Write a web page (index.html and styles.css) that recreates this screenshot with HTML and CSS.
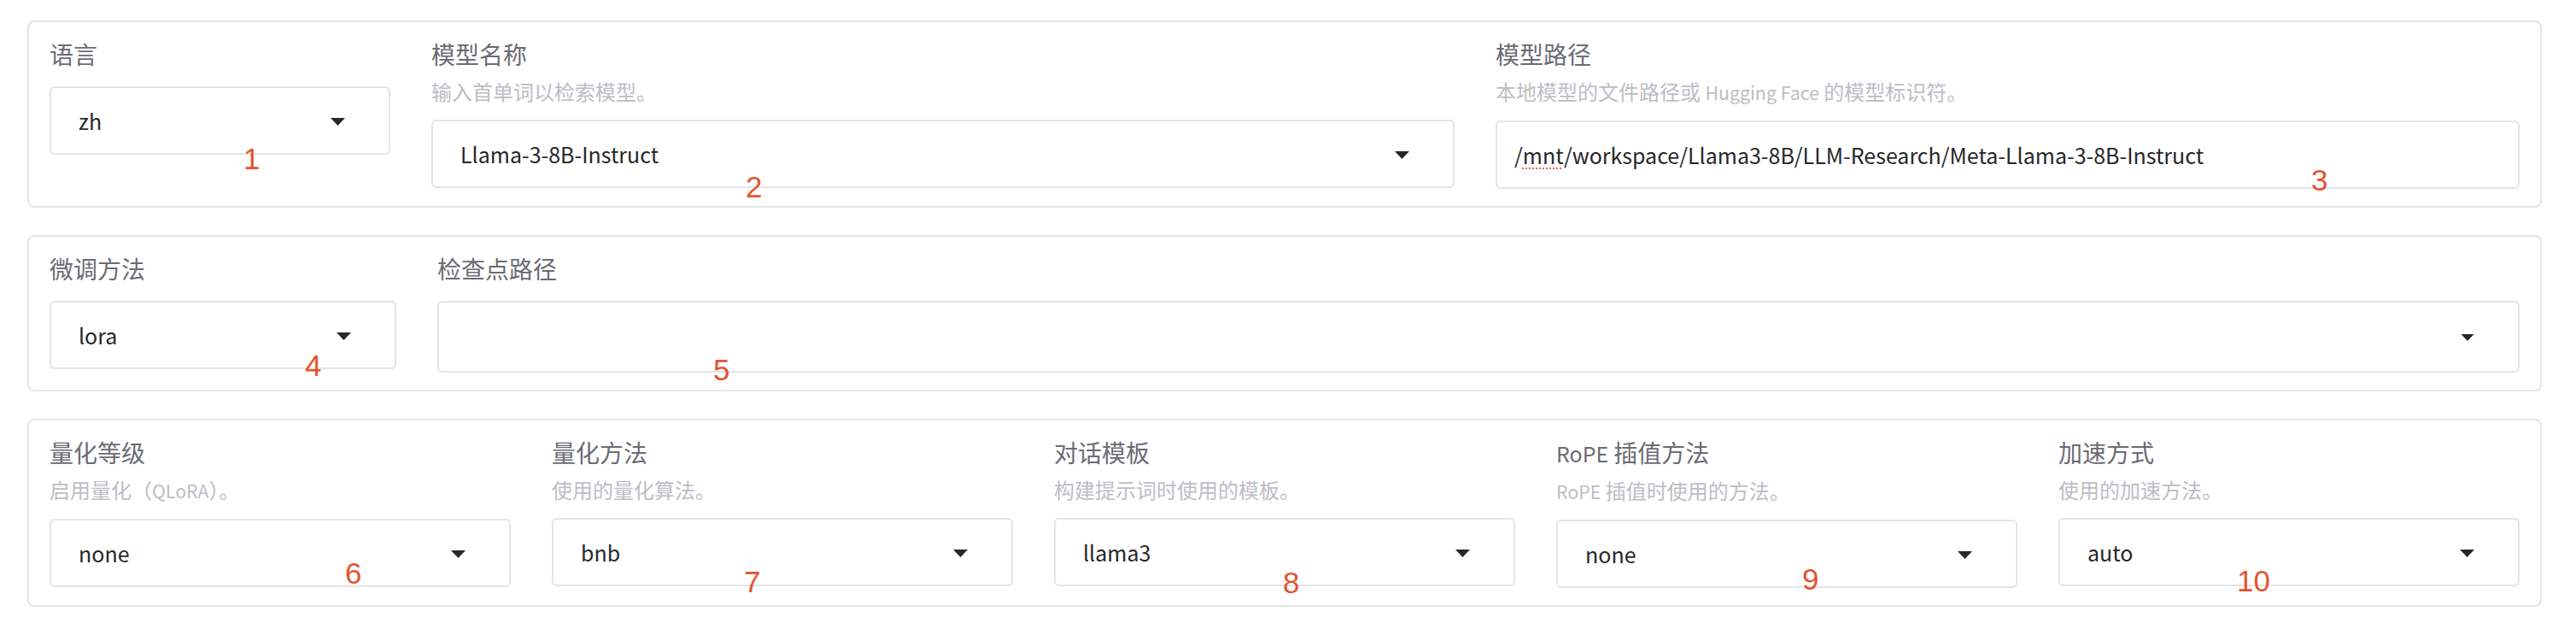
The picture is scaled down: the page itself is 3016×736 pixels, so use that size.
FILE: index.html
```html
<!DOCTYPE html>
<html lang="zh">
<head>
<meta charset="utf-8">
<title>LLaMA Board</title>
<link rel="stylesheet" href="styles.css">
</head>
<body>
<div class="page">
  <section class="panel row-a">
    <div class="field">
      <div class="head"><div class="label">语言</div></div>
      <div class="select"><span class="value">zh</span><svg class="arrow" viewBox="0 0 17 9"><path d="M0 0H17L8.5 9Z"/></svg></div>
    </div>
    <div class="field">
      <div class="head"><div class="label">模型名称</div><div class="info">输入首单词以检索模型。</div></div>
      <div class="select"><span class="value">Llama-3-8B-Instruct</span><svg class="arrow" viewBox="0 0 17 9"><path d="M0 0H17L8.5 9Z"/></svg></div>
    </div>
    <div class="field">
      <div class="head"><div class="label">模型路径</div><div class="info">本地模型的文件路径或 <span class="lat">Hugging Face</span> 的模型标识符。</div></div>
      <div class="textbox"><span class="value">/<span class="spell">mnt</span>/workspace/Llama3-8B/LLM-Research/Meta-Llama-3-8B-Instruct</span></div>
    </div>
  </section>

  <section class="panel row-b">
    <div class="field">
      <div class="head"><div class="label">微调方法</div></div>
      <div class="select"><span class="value">lora</span><svg class="arrow" viewBox="0 0 17 9"><path d="M0 0H17L8.5 9Z"/></svg></div>
    </div>
    <div class="field">
      <div class="head"><div class="label">检查点路径</div></div>
      <div class="select multi"><span class="value"></span><svg class="arrow small" viewBox="0 0 17 9"><path d="M0 0H17L8.5 9Z"/></svg></div>
    </div>
  </section>

  <section class="panel row-c">
    <div class="field">
      <div class="head"><div class="label">量化等级</div><div class="info">启用量化（<span class="lat">QLoRA</span>）。</div></div>
      <div class="select"><span class="value">none</span><svg class="arrow" viewBox="0 0 17 9"><path d="M0 0H17L8.5 9Z"/></svg></div>
    </div>
    <div class="field">
      <div class="head"><div class="label">量化方法</div><div class="info">使用的量化算法。</div></div>
      <div class="select"><span class="value">bnb</span><svg class="arrow" viewBox="0 0 17 9"><path d="M0 0H17L8.5 9Z"/></svg></div>
    </div>
    <div class="field">
      <div class="head"><div class="label">对话模板</div><div class="info">构建提示词时使用的模板。</div></div>
      <div class="select"><span class="value">llama3</span><svg class="arrow" viewBox="0 0 17 9"><path d="M0 0H17L8.5 9Z"/></svg></div>
    </div>
    <div class="field">
      <div class="head"><div class="label"><span class="lat">RoPE</span> 插值方法</div><div class="info"><span class="lat">RoPE</span> 插值时使用的方法。</div></div>
      <div class="select"><span class="value">none</span><svg class="arrow" viewBox="0 0 17 9"><path d="M0 0H17L8.5 9Z"/></svg></div>
    </div>
    <div class="field">
      <div class="head"><div class="label">加速方式</div><div class="info">使用的加速方法。</div></div>
      <div class="select"><span class="value">auto</span><svg class="arrow" viewBox="0 0 17 9"><path d="M0 0H17L8.5 9Z"/></svg></div>
    </div>
  </section>

  <span class="mark m1">1</span>
  <span class="mark m2">2</span>
  <span class="mark m3">3</span>
  <span class="mark m4">4</span>
  <span class="mark m5">5</span>
  <span class="mark m6">6</span>
  <span class="mark m7">7</span>
  <span class="mark m8">8</span>
  <span class="mark m9">9</span>
  <span class="mark m10">10</span>
</div>
</body>
</html>
```

FILE: styles.css
```css
html, body {
  margin: 0;
  background: #ffffff;
}

.page {
  position: relative;
  padding: 24px 40px 0 32px;
  display: flex;
  flex-direction: column;
  gap: 32px;
  font-family: "Noto Sans CJK SC", "Noto Sans", sans-serif;
}

.panel {
  border: 2px solid #e4e4e7;
  border-radius: 8px;
  display: grid;
  padding-bottom: 20px;
}

.row-a { grid-template-columns: 447fr 1246fr 1247fr; }
.row-b { grid-template-columns: 454fr 2486fr; }
.row-c { grid-template-columns: repeat(5, 1fr); }

.field {
  padding: 17px 24px 0;
  min-width: 0;
}

.head {
  margin-bottom: 18px;
}

.label {
  font-size: 28px;
  line-height: 40px;
  color: #6b6b74;
}

.info {
  font-size: 24px;
  line-height: 34px;
  color: #bdbdc4;
  margin: 7px 0 -2px;
}

.lat {
  font-size: 0.89em;
}

.select,
.textbox {
  height: 80px;
  box-sizing: border-box;
  border: 2px solid #e4e4e7;
  border-radius: 6px;
  display: flex;
  align-items: center;
  background: #ffffff;
}

.select {
  padding: 0 51px 0 32px;
}

.select.multi {
  height: 84px;
}

.textbox {
  padding: 0 20px;
}

.value {
  flex: 1;
  font-size: 25px;
  line-height: 36px;
  color: #27272a;
  white-space: nowrap;
  overflow: hidden;
}

.spell {
  text-decoration: underline dotted #e8685a;
  text-decoration-thickness: 2px;
  text-underline-offset: 4px;
}

.arrow {
  width: 17px;
  height: 9px;
  flex: none;
  fill: #27272a;
  margin-top: 2px;
}

.arrow.small {
  width: 16px;
  height: 8px;
}

.mark {
  position: absolute;
  font-family: "Liberation Sans", Arial, sans-serif;
  font-size: 35px;
  line-height: 35px;
  color: #e2552f;
}

.m1 { left: 285px; top: 168px; }
.m2 { left: 873px; top: 201px; }
.m3 { left: 2706px; top: 193px; }
.m4 { left: 357px; top: 410px; }
.m5 { left: 835px; top: 415px; }
.m6 { left: 404px; top: 653px; }
.m7 { left: 871px; top: 663px; }
.m8 { left: 1502px; top: 664px; }
.m9 { left: 2110px; top: 660px; }
.m10 { left: 2619px; top: 662px; }
```
